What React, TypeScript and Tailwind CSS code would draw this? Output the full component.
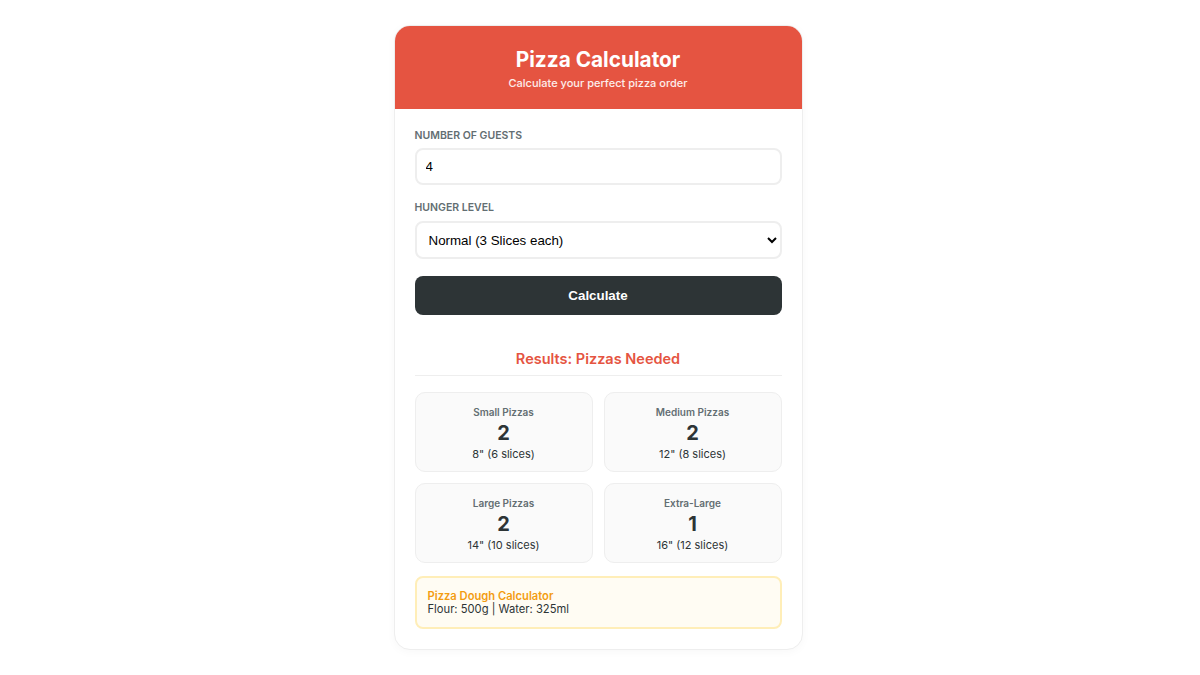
import { useState } from "react";

interface Result {
  label: string;
  count: number;
  note: string;
}

const results: Result[] = [
  { label: "Small Pizzas", count: 2, note: '8" (6 slices)' },
  { label: "Medium Pizzas", count: 2, note: '12" (8 slices)' },
  { label: "Large Pizzas", count: 2, note: '14" (10 slices)' },
  { label: "Extra-Large", count: 1, note: '16" (12 slices)' },
];

const ResultCard = ({ label, count, note }: Result) => {
  return (
    <div className="flex h-[80px] flex-col items-center rounded-[10px] border border-[#eeeeee] bg-[#fafafa] pt-[12px]">
      <div className="text-[10px] font-semibold leading-[14px] text-[#636e72]">{label}</div>
      <div className="mt-[2px] text-[20px] font-bold leading-[24px] text-[#2d3436]">{count}</div>
      <div className="mt-[1px] text-[11px] leading-[16px] text-[#2d3436]">{note}</div>
    </div>
  );
};

const App = () => {
  const [guests, setGuests] = useState("4");

  return (
    <div className="flex min-h-[675px] justify-center bg-white pr-[4px] pt-[25px] font-['Inter',sans-serif]">
      <div className="h-fit w-[409px] overflow-hidden rounded-[16px] border border-[#eeeeee] bg-white shadow-[0_2px_10px_rgba(0,0,0,0.03)]">
        <div className="flex h-[83px] flex-col items-center bg-[#e55441] pt-[21px] text-white">
          <h1 className="text-[20.8px] font-bold leading-[26px]">Pizza Calculator</h1>
          <p className="mt-[2px] text-[11px] font-medium leading-[16px] text-white/90">
            Calculate your perfect pizza order
          </p>
        </div>

        <div className="px-[20px] pb-[20px] pt-[19px]">
          <label className="block text-[10.5px] font-semibold uppercase leading-[16px] text-[#636e72]">
            Number of Guests
          </label>
          <input
            type="number"
            value={guests}
            onChange={(e) => setGuests(e.target.value)}
            className="mt-[4px] h-[37px] w-full rounded-[8px] border-2 border-[#eeeeee] px-[9px] font-['Liberation_Sans',Arial,sans-serif] text-[13.33px] text-black outline-none [appearance:textfield] [&::-webkit-inner-spin-button]:appearance-none"
          />

          <label className="mt-[15px] block text-[10.5px] font-semibold uppercase leading-[16px] text-[#636e72]">
            Hunger Level
          </label>
          <select
            defaultValue="3"
            className="mt-[5px] h-[38px] w-full rounded-[8px] border-2 border-[#eeeeee] bg-white px-[8px] font-['Liberation_Sans',Arial,sans-serif] text-[13.33px] text-black outline-none"
          >
            <option value="2">Light (2 Slices each)</option>
            <option value="3">Normal (3 Slices each)</option>
            <option value="4">Hungry (4 Slices each)</option>
          </select>

          <button className="mt-[17px] h-[39px] w-full rounded-[8px] bg-[#2d3436] font-['Liberation_Sans',Arial,sans-serif] text-[13.33px] font-bold text-white">
            Calculate
          </button>

          <div className="mt-[33px] border-b border-[#eeeeee] pb-[5px] text-center text-[14.5px] font-semibold leading-[22px] text-[#e55441]">
            Results: Pizzas Needed
          </div>

          <div className="mt-[16px] grid grid-cols-2 gap-[11px]">
            {results.map((r) => (
              <ResultCard key={r.label} {...r} />
            ))}
          </div>

          <div className="mt-[13px] h-[53px] rounded-[8px] border-2 border-[#ffeeb8] bg-[#fffcf3] px-[11px] pt-[12px] text-[11.2px] leading-[13px]">
            <div className="font-semibold text-[#f39c12]">Pizza Dough Calculator</div>
            <div className="text-[#2d3436]">Flour: 500g | Water: 325ml</div>
          </div>
        </div>
      </div>
    </div>
  );
};

export default App;
